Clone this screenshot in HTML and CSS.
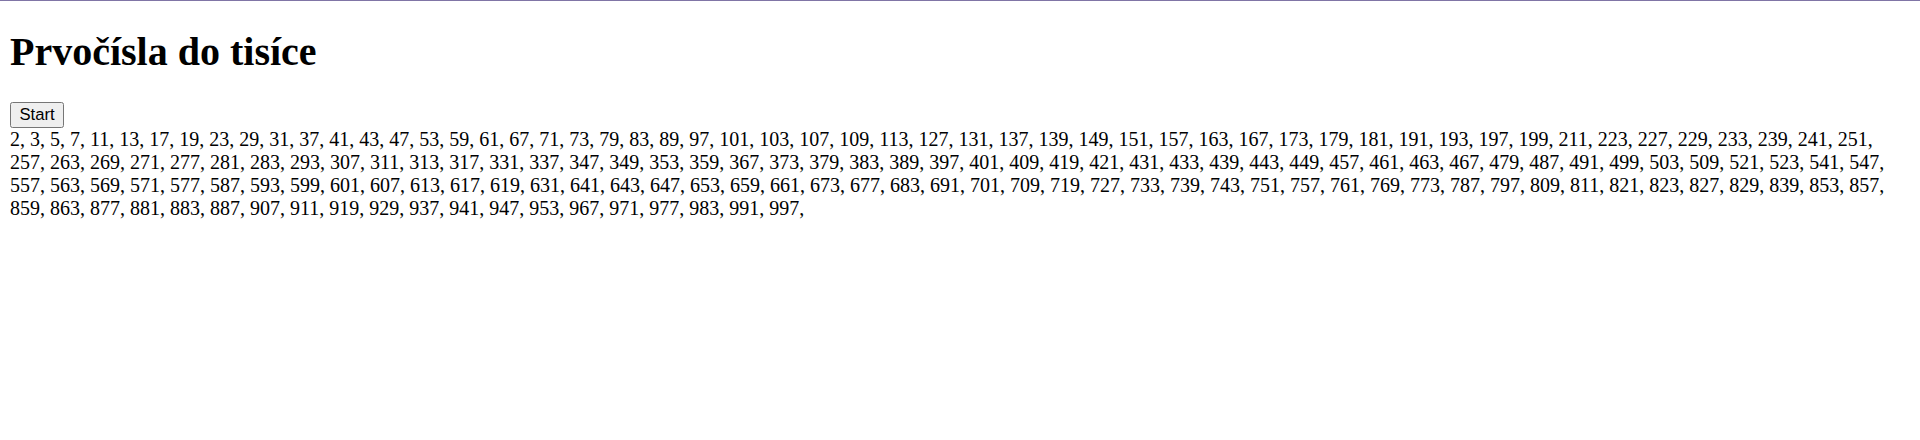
FILE: index.html
```html
<!DOCTYPE html>
<html lang="cs">
<head>
<meta charset="utf-8">
<title>Prvočísla do tisíce</title>
<link rel="stylesheet" href="styles.css">
</head>
<body>
<h1>Prvočísla do tisíce</h1>
<button class="start">Start</button>
<div class="vysledek">2, 3, 5, 7, 11, 13, 17, 19, 23, 29, 31, 37, 41, 43, 47, 53, 59, 61, 67, 71, 73, 79, 83, 89, 97, 101, 103, 107, 109, 113, 127, 131, 137, 139, 149, 151, 157, 163, 167, 173, 179, 181, 191, 193, 197, 199, 211, 223, 227, 229, 233, 239, 241, 251, 257, 263, 269, 271, 277, 281, 283, 293, 307, 311, 313, 317, 331, 337, 347, 349, 353, 359, 367, 373, 379, 383, 389, 397, 401, 409, 419, 421, 431, 433, 439, 443, 449, 457, 461, 463, 467, 479, 487, 491, 499, 503, 509, 521, 523, 541, 547, 557, 563, 569, 571, 577, 587, 593, 599, 601, 607, 613, 617, 619, 631, 641, 643, 647, 653, 659, 661, 673, 677, 683, 691, 701, 709, 719, 727, 733, 739, 743, 751, 757, 761, 769, 773, 787, 797, 809, 811, 821, 823, 827, 829, 839, 853, 857, 859, 863, 877, 881, 883, 887, 907, 911, 919, 929, 937, 941, 947, 953, 967, 971, 977, 983, 991, 997, </div>
</body>
</html>
```
FILE: styles.css
```css
html {
  border-top: 1px solid #8075a6;
  zoom: 1.25;
}
body {
  font-family: "Liberation Serif", "Times New Roman", serif;
  font-size: 16px;
  margin: 0 8px 8px;
  color: #000;
  background: #fff;
}
h1 {
  font-size: 32px;
  margin: 0.67em 0;
}
.start {
  font-family: "Liberation Sans", Arial, sans-serif;
  font-size: 13.33px;
}
```
